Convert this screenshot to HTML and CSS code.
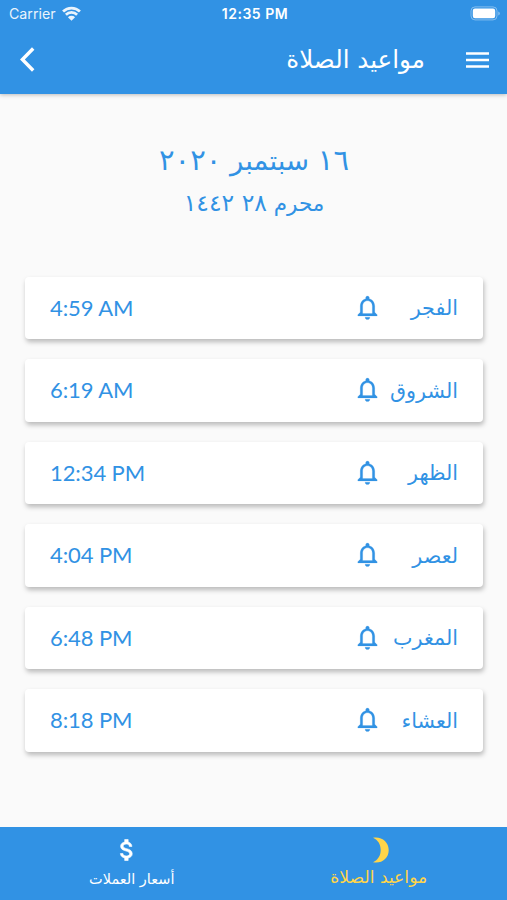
FILE: index.html
```
<!DOCTYPE html>
<html lang="ar" dir="rtl">
<head>
    <meta charset="UTF-8">
    <meta name="viewport" content="width=device-width, initial-scale=1.0">
    <title>مواعيد الصلاة</title>
    <link rel="stylesheet" href="styles.css">
</head>
<body>
    <svg class="sprite" aria-hidden="true">
        <symbol id="bell" viewBox="0 0 24 24">
            <path d="M12 22c1.1 0 2-.9 2-2h-4c0 1.1.9 2 2 2zm6-6v-5c0-3.07-1.63-5.64-4.5-6.32V4c0-.83-.67-1.5-1.5-1.5s-1.5.67-1.5 1.5v.68C7.64 5.36 6 7.92 6 11v5l-2 2v1h16v-1l-2-2zm-2 1H8v-6c0-2.48 1.51-4.5 4-4.5s4 2.02 4 4.5v6z"/>
        </symbol>
    </svg>

    <header class="header">
        <div class="status" dir="ltr">
            <div class="carrier">
                <span>Carrier</span>
                <svg class="wifi" viewBox="0 0 18 14">
                    <path d="M1 5.2a11.5 11.5 0 0 1 16 0M3.7 8.2a7.6 7.6 0 0 1 10.6 0" fill="none" stroke="#fff" stroke-width="2.6"/>
                    <path d="M9 13.8 5.6 10.6a4.9 4.9 0 0 1 6.8 0z" fill="#fff"/>
                </svg>
            </div>
            <div class="clock">12:35 PM</div>
            <svg class="battery" viewBox="0 0 31 15">
                <rect x="1" y=".9" width="26" height="13" rx="4" fill="none" stroke="#fff" stroke-opacity=".4"/>
                <rect x="2.8" y="2.6" width="22.4" height="9.6" rx="2.2" fill="#fff"/>
                <path d="M28.4 5.4v4a2.2 2.2 0 0 0 0-4z" fill="#fff" opacity=".5"/>
            </svg>
        </div>
        <div class="toolbar">
            <svg class="menu" viewBox="0 0 23 16">
                <path d="M0 1.5h23M0 8h23M0 14.5h23" stroke="#fff" stroke-width="2.4"/>
            </svg>
            <h1>مواعيد الصلاة</h1>
            <svg class="back" viewBox="0 0 15 25">
                <path d="M13.2 1.5 2.4 12.5l10.8 11" fill="none" stroke="#fff" stroke-width="3.4"/>
            </svg>
        </div>
    </header>

    <main>
        <div class="dates">
            <p class="date"><span class="num">١٦</span> سبتمبر <span class="num">٢٠٢٠</span></p>
            <p class="hijri">محرم <span class="num">٢٨ ١٤٤٢</span></p>
        </div>
        <div class="prayers">
            <div class="card">
                <span class="name">الفجر</span>
                <svg class="bell"><use href="#bell"/></svg>
                <span class="time" dir="ltr">4:59 AM</span>
            </div>
            <div class="card">
                <span class="name">الشروق</span>
                <svg class="bell"><use href="#bell"/></svg>
                <span class="time" dir="ltr">6:19 AM</span>
            </div>
            <div class="card">
                <span class="name">الظهر</span>
                <svg class="bell"><use href="#bell"/></svg>
                <span class="time" dir="ltr">12:34 PM</span>
            </div>
            <div class="card">
                <span class="name">لعصر</span>
                <svg class="bell"><use href="#bell"/></svg>
                <span class="time" dir="ltr">4:04 PM</span>
            </div>
            <div class="card">
                <span class="name">المغرب</span>
                <svg class="bell"><use href="#bell"/></svg>
                <span class="time" dir="ltr">6:48 PM</span>
            </div>
            <div class="card">
                <span class="name">العشاء</span>
                <svg class="bell"><use href="#bell"/></svg>
                <span class="time" dir="ltr">8:18 PM</span>
            </div>
        </div>
    </main>

    <nav class="tabs">
        <div class="tab active">
            <svg class="tab-icon" viewBox="0 0 28 28">
                <path d="M7 1.8C15.5.2 22.7 6 22.7 14.2S15.5 28 7 26.2C12 24 14.7 19.5 14.7 14S12 4 7 1.8z" fill="#ffd54a"/>
            </svg>
            <span>مواعيد الصلاة</span>
        </div>
        <div class="tab">
            <svg class="tab-icon" viewBox="0 0 24 24">
                <path d="M11.8 10.9c-2.27-.59-3-1.2-3-2.15 0-1.09 1.01-1.85 2.7-1.85 1.78 0 2.44.85 2.5 2.1h2.21c-.07-1.72-1.12-3.3-3.21-3.81V3h-3v2.16c-1.94.42-3.5 1.68-3.5 3.61 0 2.31 1.91 3.46 4.7 4.13 2.5.6 3 1.48 3 2.41 0 .69-.49 1.79-2.7 1.79-2.06 0-2.87-.92-2.98-2.1h-2.2c.12 2.19 1.76 3.42 3.68 3.83V21h3v-2.15c1.95-.37 3.5-1.5 3.5-3.55 0-2.84-2.43-3.81-4.7-4.4z" fill="#fff" stroke="#fff" stroke-width=".5"/>
            </svg>
            <span>أسعار العملات</span>
        </div>
    </nav>
</body>
</html>
```
FILE: styles.css
```
* {
    box-sizing: border-box;
}
body {
    margin: 0;
    height: 900px;
    display: flex;
    flex-direction: column;
    overflow: hidden;
    font-family: "DejaVu Sans", sans-serif;
    background-color: #fafafa;
    color: #3192e4;
}
p, h1 {
    margin: 0;
    font-weight: normal;
}
svg {
    display: block;
    flex: none;
}
.sprite {
    width: 0;
    height: 0;
    position: absolute;
}
.header {
    height: 93.5px;
    background-color: #3192e4;
    color: white;
    box-shadow: 0 1px 4px rgba(0,0,0,0.25);
}
.status {
    height: 27px;
    padding: 0 6px 0 9px;
    display: grid;
    grid-template-columns: 1fr auto 1fr;
    align-items: center;
    font-family: Inter, sans-serif;
    font-size: 14.2px;
}
.carrier {
    display: flex;
    align-items: center;
    gap: 6px;
    opacity: 0.9;
}
.wifi {
    width: 19px;
    height: 15px;
}
.clock {
    font-size: 14px;
    font-weight: 600;
    letter-spacing: 0.5px;
}
.battery {
    width: 31px;
    height: 15px;
    justify-self: end;
}
.toolbar {
    height: 65px;
    padding: 0 18px 0 20px;
    display: flex;
    align-items: center;
}
.menu {
    width: 23px;
    height: 16px;
}
.toolbar h1 {
    flex: 1;
    padding-right: 41px;
    font-size: 24.6px;
    line-height: 30px;
}
.back {
    width: 15px;
    height: 25px;
}
main {
    flex: 1;
    padding: 45px 24px 0 25px;
}
.dates {
    height: 138px;
    text-align: center;
}
.date {
    font-size: 27.5px;
    line-height: 42px;
}
.date .num {
    font-size: 29px;
}
.hijri {
    font-size: 21.5px;
    line-height: 44px;
}
.hijri .num {
    font-size: 23.5px;
}
.prayers {
    display: flex;
    flex-direction: column;
    gap: 20px;
}
.card {
    height: 62.5px;
    padding: 0 25px 1px;
    display: flex;
    align-items: center;
    background: white;
    border-radius: 4px;
    box-shadow: 1px 3px 5px rgba(0,0,0,0.26);
}
.name {
    width: 76px;
    padding-top: 2px;
    font-size: 20.7px;
    white-space: nowrap;
}
.bell {
    width: 29px;
    height: 29px;
    fill: #3192e4;
    stroke: #3192e4;
    stroke-width: 0.15px;
}
.time {
    margin-right: auto;
    font-family: Lato, sans-serif;
    font-size: 22px;
    letter-spacing: -0.1px;
}
.tabs {
    height: 73px;
    display: flex;
    background-color: #3192e4;
}
.tab {
    flex: 1;
    display: flex;
    flex-direction: column;
    align-items: center;
    padding-top: 9px;
    font-size: 14.5px;
    line-height: 30px;
    color: white;
}
.tab span {
    padding-left: 10px;
}
.tab.active {
    font-size: 17.2px;
    line-height: 26px;
    color: #ffd54a;
}
.tab.active span {
    padding: 0 3px 0 0;
}
.tab-icon {
    width: 28px;
    height: 28px;
}
```
